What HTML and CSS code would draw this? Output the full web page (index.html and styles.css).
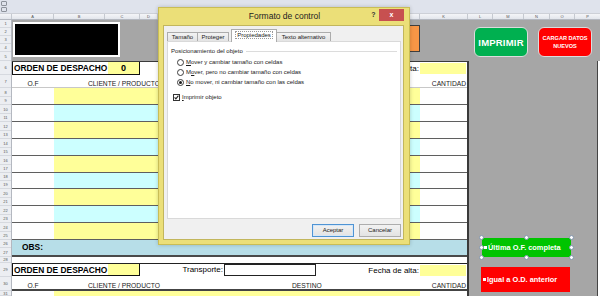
FILE: index.html
```html
<!DOCTYPE html>
<html lang="es">
<head>
  <meta charset="UTF-8">
  <title>Formato de control</title>
  <link rel="stylesheet" href="styles.css">
</head>
<body>
  <div class="app">
    <div class="outline-bar"><span class="lvl"></span><span class="lvl"></span></div>

    <div class="col-heads">
      <span class="ch corner"></span>
      <span class="ch ca">A</span>
      <span class="ch cb">B</span>
      <span class="ch cc">C</span>
      <span class="ch cd">D</span>
      <span class="ch cmid"></span>
      <span class="ch ck">K</span>
      <span class="ch cl">L</span>
      <span class="ch cm">M</span>
      <span class="ch cn">N</span>
      <span class="ch co">O</span>
      <span class="ch cp">P</span>
    </div>

    <div class="sheet">
      <div class="row-heads">
        <span class="rh h8">1</span><span class="rh h8">2</span><span class="rh h8">3</span><span class="rh h8">4</span><span class="rh h9">5</span>
        <span class="rh h14">6</span><span class="rh h13">7</span>
        <span class="rh h9">8</span><span class="rh h8">9</span><span class="rh h9">10</span><span class="rh h8">11</span>
        <span class="rh h9">12</span><span class="rh h8">13</span><span class="rh h9">14</span><span class="rh h8">15</span>
        <span class="rh h9">16</span><span class="rh h8">17</span><span class="rh h8">18</span><span class="rh h8">19</span>
        <span class="rh h9">20</span><span class="rh h8">21</span><span class="rh h9">22</span><span class="rh h8">23</span>
        <span class="rh h9">24</span><span class="rh h8">25</span><span class="rh h8">26</span><span class="rh h9">27</span>
        <span class="rh h6">28</span><span class="rh h14">29</span><span class="rh h14">30</span><span class="rh h5">31</span>
      </div>

      <div class="cells">
        <div class="top-band">
          <div class="logo"></div>
          <div class="orange"></div>
          <div class="big-btn b-print">IMPRIMIR</div>
          <div class="big-btn b-new">CARGAR DATOS<br>NUEVOS</div>
        </div>

        <div class="work">
          <div class="form">
            <div class="od-row">
              <div class="od-box"><span class="od-title">ORDEN DE DESPACHO</span><span class="od-num">0</span></div>
              <div class="alta">Fecha de alta:<span class="alta-val"></span></div>
            </div>
            <div class="head-row">
              <span class="h-of">O.F</span>
              <span class="h-cli">CLIENTE / PRODUCTO</span>
              <span class="h-cant">CANTIDAD</span>
            </div>

            <div class="band yl"><span class="c-a"></span><span class="c-b"></span><span class="c-k"></span></div>
            <div class="band cy"><span class="c-a"></span><span class="c-b"></span><span class="c-k"></span></div>
            <div class="band yl"><span class="c-a"></span><span class="c-b"></span><span class="c-k"></span></div>
            <div class="band cy"><span class="c-a"></span><span class="c-b"></span><span class="c-k"></span></div>
            <div class="band yl"><span class="c-a"></span><span class="c-b"></span><span class="c-k"></span></div>
            <div class="band cy short"><span class="c-a"></span><span class="c-b"></span><span class="c-k"></span></div>
            <div class="band yl"><span class="c-a"></span><span class="c-b"></span><span class="c-k"></span></div>
            <div class="band cy"><span class="c-a"></span><span class="c-b"></span><span class="c-k"></span></div>
            <div class="band yl"><span class="c-a"></span><span class="c-b"></span><span class="c-k"></span></div>

            <div class="obs">OBS:</div>
            <div class="gap"></div>

            <div class="od-row second">
              <div class="od-box"><span class="od-title">ORDEN DE DESPACHO</span><span class="od-num"></span></div>
              <span class="tr-label">Transporte:</span>
              <span class="tr-box"></span>
              <div class="alta">Fecha de alta:<span class="alta-val"></span></div>
            </div>
            <div class="head-row second">
              <span class="h-of">O.F</span>
              <span class="h-cli">CLIENTE / PRODUCTO</span>
              <span class="h-dest">DESTINO</span>
              <span class="h-cant">CANTIDAD</span>
            </div>
            <div class="band-end yl"><span class="c-a"></span><span class="c-b"></span><span class="c-k"></span></div>
          </div>

          <div class="side">
            <div class="side-main">
              <div class="shape s-last">Última O.F. completa
                <i class="hd tl"></i><i class="hd tm"></i><i class="hd tr"></i>
                <i class="hd ml"></i><i class="hd mr"></i>
                <i class="hd bl"></i><i class="hd bm"></i><i class="hd br"></i>
              </div>
              <div class="shape s-same">Igual a O.D. anterior</div>
            </div>
            <div class="next"></div>
          </div>
        </div>
      </div>
    </div>

    <div class="dialog">
      <div class="dlg-title">
        <span class="dlg-name">Formato de control</span>
        <span class="dlg-help">?</span>
        <span class="dlg-close">x</span>
      </div>
      <div class="dlg-body">
        <div class="tabs">
          <span class="tab w-tam">Tamaño</span>
          <span class="tab w-pro">Proteger</span>
          <span class="tab on"><span class="focus">Propiedades</span></span>
          <span class="tab w-alt">Texto alternativo</span>
        </div>
        <div class="panel">
          <div class="group-title"><span>Posicionamiento del objeto</span><i class="rule"></i></div>
          <div class="options">
            <div class="opt"><span class="radio"></span><span><u>M</u>over y cambiar tamaño con celdas</span></div>
            <div class="opt"><span class="radio"></span><span>M<u>o</u>ver, pero no cambiar tamaño con celdas</span></div>
            <div class="opt"><span class="radio on"></span><span><u>N</u>o mover, ni cambiar tamaño con las celdas</span></div>
          </div>
          <div class="check-row">
            <span class="check"><svg width="5" height="5" viewBox="0 0 5 5"><polyline points="0.6,2.4 1.9,3.9 4.4,0.7" fill="none" stroke="#222" stroke-width="1.1"/></svg></span>
            <span><u>I</u>mprimir objeto</span>
          </div>
        </div>
        <div class="dlg-actions">
          <span class="btn default">Aceptar</span>
          <span class="btn">Cancelar</span>
        </div>
      </div>
    </div>
  </div>
</body>
</html>
```

FILE: styles.css
```css
/* Reset & Base */
* { margin: 0; padding: 0; box-sizing: border-box; }
body {
  width: 600px; height: 296px; overflow: hidden;
  background: #fff; color: #000;
  font-family: "Liberation Sans", Arial, sans-serif;
}
.app { position: relative; width: 600px; height: 296px; overflow: hidden; }

/* Outline strip + column headings */
.outline-bar {
  height: 13px; background: #dfe3ec;
  display: flex; flex-direction: column; gap: 1px; padding: 1px 0 0 1px;
}
.lvl { width: 6px; height: 5px; border: 1px solid #8d929b; border-radius: 1px; }

.col-heads {
  display: flex; height: 7px;
  background: linear-gradient(#f4f5f8, #e3e6ec);
  border-top: 1px solid #cdd0d7; border-bottom: 1px solid #b4b8c0;
}
.ch {
  font-size: 4px; line-height: 5px; text-align: center; color: #555;
  border-right: 1px solid #c5c9d0;
}
.corner { width: 12px; }
.ca { width: 42px; } .cb { width: 51px; } .cc { width: 35px; } .cd { width: 18px; }
.cmid { width: 262px; }
.ck { width: 48px; } .cl { width: 25px; } .cm { width: 31px; }
.cn { width: 26px; } .co { width: 25px; } .cp { width: 25px; border-right: none; }

/* Sheet */
.sheet { display: flex; height: 276px; }
.row-heads {
  width: 12px; display: flex; flex-direction: column;
  background: #eceef2; border-right: 1px solid #b4b8c0;
}
.rh {
  display: flex; align-items: center; justify-content: center;
  font-size: 4px; color: #555; border-bottom: 1px solid #d6d9df;
}
.h5 { height: 5px; } .h6 { height: 6px; } .h8 { height: 8px; } .h9 { height: 9px; }
.h13 { height: 13px; } .h14 { height: 14px; }

.cells { flex: 1; display: flex; flex-direction: column; }

/* Rows 1-5 */
.top-band { height: 41px; display: flex; align-items: flex-start; background: #a6a6a6; }
.logo { width: 107px; height: 35px; margin: 2px 0 0 1px; background: #000; border: 2px solid #fff; }
.orange { width: 25px; height: 27px; margin: 5px 0 0 275px; background: #f79646; border: 1px solid #3f3f3f; }
.big-btn {
  width: 54px; height: 30px; margin-top: 7px;
  border: 1.5px solid #dcdcdc; border-radius: 6px;
  display: flex; align-items: center; justify-content: center; text-align: center;
  color: #fff; font-weight: bold;
}
.b-print { margin-left: 54px; background: #00b050; font-size: 9.5px; letter-spacing: 0.2px; }
.b-new { margin-left: 10px; background: #ff0000; font-size: 5.6px; line-height: 8px; }

/* Form */
.work { flex: 1; display: flex; }
.form {
  width: 457px; display: flex; flex-direction: column; background: #fff;
  border-top: 1px solid #3a3a3a; border-right: 2px solid #3a3a3a;
}
.od-row { height: 13px; display: flex; align-items: flex-start; }
.od-box { width: 128px; height: 13px; display: flex; border: 1px solid #111; border-top: none; }
.od-title { flex: 1; font-size: 8.4px; font-weight: bold; line-height: 12px; padding-left: 1px; }
.od-num { width: 31px; background: #ffff99; font-size: 9px; font-weight: bold; line-height: 12px; text-align: center; }
.alta { margin-left: auto; height: 13px; display: flex; align-items: center; font-size: 8px; }
.alta-val { width: 46px; height: 11px; margin: 0 1px; background: #ffff99; }

.od-row.second { height: 14px; border-top: 1px solid #222; }
.od-row.second .od-box { height: 12px; }
.od-row.second .alta { height: 12px; }
.tr-label { width: 83px; text-align: right; font-size: 8px; line-height: 12px; }
.tr-box { width: 92px; height: 12px; margin-left: 1px; border: 1px solid #222; background: #fff; }

.head-row {
  height: 13px; display: flex; align-items: flex-end;
  font-size: 6.7px; line-height: 7px; color: #222;
  border-bottom: 1px solid #c8c8c8;
}
.head-row.second { height: 14px; border-bottom: 2px solid #444; }
.h-of { width: 42px; text-align: center; }
.h-cli { width: 238px; padding-left: 34px; }
.h-cant { margin-left: auto; padding-right: 1px; }

.band { height: 17px; display: flex; border-bottom: 1px solid #5f5f5f; }
.band.short { height: 16px; }
.band-end { flex: 1; display: flex; }
.c-a { width: 42px; }
.c-b { flex: 1; }
.c-k { width: 47px; }
.yl .c-b { background: #ffff99; }
.cy .c-b { background: #ccffff; }

.obs {
  height: 17px; padding-left: 10px; line-height: 15px;
  background: #b7dee8; border-bottom: 2px solid #4a4a4a;
  font-size: 8.4px; font-weight: bold;
}
.gap { height: 6px; }

/* Right grey area */
.side { flex: 1; display: flex; background: #a6a6a6; }
.side-main { flex: 1; padding: 177px 0 0 13px; }
.next { width: 3px; background: #fff; border-left: 1px solid #444; }
.shape {
  position: relative; width: 89px; display: flex; align-items: center; padding-left: 2px;
  color: #fff; font-size: 7.4px; font-weight: bold;
}
.shape::before { content: ""; width: 3px; height: 3px; margin-right: 1px; background: #fff; }
.s-last { height: 19px; background: #00c400; }
.s-same { height: 25px; margin: 10px 0 0 -1px; background: #ff0000; }
.hd {
  position: absolute; width: 5px; height: 5px; border-radius: 50%;
  background: #fff; border: 1px solid #8496ad;
}
.tl { left: -3px; top: -3px; } .tm { left: 42px; top: -3px; } .tr { right: -3px; top: -3px; }
.ml { left: -3px; top: 7px; } .mr { right: -3px; top: 7px; }
.bl { left: -3px; bottom: -3px; } .bm { left: 42px; bottom: -3px; } .br { right: -3px; bottom: -3px; }

/* Dialog */
.dialog {
  position: absolute; left: 158px; top: 7px; width: 252px; height: 238px;
  display: flex; flex-direction: column; padding: 0 5px 4px 4px;
  background: #ebdf78; border: 1px solid #c9bd55;
  box-shadow: 0 0 4px rgba(0,0,0,0.2);
}
.dlg-title { height: 17px; display: flex; align-items: flex-start; }
.dlg-name { flex: 1; padding-left: 38px; text-align: center; font-size: 8.5px; line-height: 17px; color: #222; }
.dlg-help { width: 11px; text-align: center; font-size: 7px; font-weight: bold; line-height: 14px; color: #333; }
.dlg-close {
  width: 25px; height: 12px; margin-top: 1px;
  background: #c75050; color: #fff;
  font-size: 7px; font-weight: bold; line-height: 11px; text-align: center;
}
.dlg-body {
  flex: 1; display: flex; flex-direction: column; padding: 3px 1px 0 3px;
  background: #f0f0f0; border: 1px solid #c2b65c;
  font-size: 6px; color: #1a1a1a;
}
.tabs { position: relative; z-index: 1; display: flex; align-items: flex-end; height: 12px; }
.tab {
  height: 9px; border: 1px solid #acacac; border-bottom: none;
  background: linear-gradient(#f3f3f3, #e4e4e4);
  line-height: 8px; text-align: center; white-space: nowrap;
}
.w-tam { width: 31px; }
.w-pro { width: 32px; margin-left: -1px; }
.tab.on { width: 46px; height: 13px; margin: 0 0 -1px 2px; background: #fff; line-height: 11px; }
.w-alt { width: 55px; margin-left: -1px; }
.focus { outline: 1px dotted #999; padding: 0 1px; }

.panel { height: 178px; margin-right: 1px; background: #fff; border: 1px solid #d9d9d9; }
.group-title { height: 8px; margin-top: 5px; padding-left: 3px; display: flex; align-items: center; }
.rule { flex: 1; height: 1px; margin: 0 3px; background: #dcdcdc; }
.options { margin-top: 2px; }
.opt { height: 10px; padding-left: 9px; display: flex; align-items: center; }
.radio {
  width: 7px; height: 7px; margin-right: 2px; border-radius: 50%;
  border: 1px solid #3c3c3c; background: #fff;
  display: flex; align-items: center; justify-content: center;
}
.radio.on::after { content: ""; width: 3px; height: 3px; border-radius: 50%; background: #1a1a1a; }
.check-row { height: 10px; margin-top: 5px; padding-left: 5px; display: flex; align-items: center; }
.check {
  width: 7px; height: 7px; margin-right: 2px;
  border: 1px solid #333; background: #fff;
  display: flex; align-items: center; justify-content: center;
}
.check svg { display: block; }

.dlg-actions { display: flex; justify-content: flex-end; gap: 5px; margin: 5px 1px 0 0; }
.btn {
  width: 42px; height: 13px; line-height: 11px; text-align: center;
  border: 1px solid #adadad; background: linear-gradient(#f2f2f2, #e3e3e3);
}
.btn.default { border-color: #4f94d4; box-shadow: inset 0 0 0 1px #d6e7f7; }
```
